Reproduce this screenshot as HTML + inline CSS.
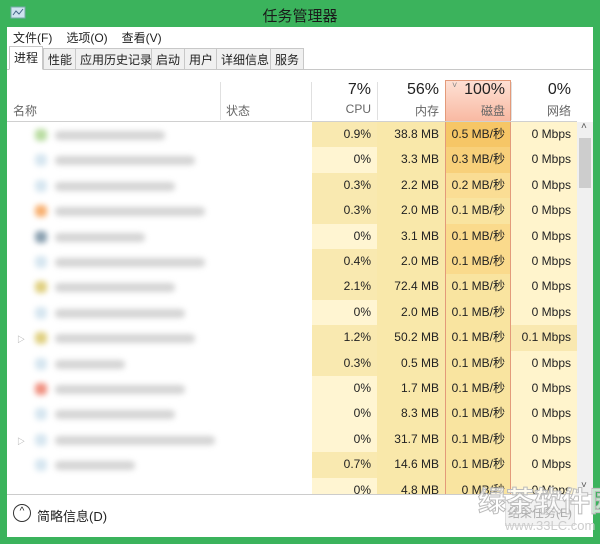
<!DOCTYPE html>
<html><head><meta charset="utf-8"><style>
*{margin:0;padding:0;box-sizing:border-box}
body{width:600px;height:544px;background:#3bb35c;font-family:"Liberation Sans","Noto Sans CJK SC",sans-serif;font-size:12px;color:#222;position:relative;overflow:hidden}
.a{position:absolute}
.title{left:0;top:5px;width:600px;text-align:center;font-size:15px;color:#1a1a1a}
.client{left:7px;top:27px;width:586px;height:510px;background:#fff}
.menu span{margin-right:14px}
.tab{top:48px;height:22px;border:1px solid #c8c8c8;background:#f0f0f0;padding:2px 4px;font-size:12px}
.c{position:absolute;text-align:right;padding-right:6px;line-height:25.4px;height:25.4px;font-size:12px}
.blur{position:absolute;height:9px;border-radius:4px;filter:blur(3px)}
</style></head><body>
<div class="a title">任务管理器</div>
<svg class="a" style="left:10px;top:6px" width="16" height="14"><rect x="1" y="1" width="14" height="11" fill="#cfe3ef" stroke="#7aa" /><path d="M3 9 L6 5 L9 8 L13 3" stroke="#468" fill="none"/></svg>
<div class="a client"></div>
<div class="a menu" style="left:13px;top:29px;font-size:12px"><span>文件(F)</span><span>选项(O)</span><span>查看(V)</span></div>
<div class="a" style="left:7px;top:69px;width:586px;height:1px;background:#c8c8c8"></div>
<div class="a tab" style="left:9px;top:46px;height:24px;background:#fff;border-bottom-color:#fff">进程</div>
<div class="a tab" style="left:43px">性能</div>
<div class="a tab" style="left:75px">应用历史记录</div>
<div class="a tab" style="left:151px">启动</div>
<div class="a tab" style="left:184px">用户</div>
<div class="a tab" style="left:216px">详细信息</div>
<div class="a tab" style="left:270px">服务</div>
<div class="a" style="left:13px;top:102px;color:#666">名称</div>
<div class="a" style="left:220px;top:82px;width:1px;height:38px;background:#e0e0e0"></div>
<div class="a" style="left:226px;top:102px;color:#666">状态</div>
<div class="a" style="left:311px;top:82px;width:1px;height:38px;background:#e0e0e0"></div>
<div class="a" style="left:377px;top:82px;width:1px;height:38px;background:#e0e0e0"></div>
<div class="a" style="left:445px;top:80px;width:66px;height:42px;background:linear-gradient(#fde0d4,#f9b9a2);border:1px solid #e39a7a"></div>
<div class="a" style="left:511px;top:82px;width:1px;height:38px;background:#e0e0e0"></div>
<div class="a" style="left:7px;top:121px;width:570px;height:1px;background:#d0d0d0"></div>
<div class="a" style="left:312px;top:81px;width:59px;text-align:right;font-size:16px">7%</div>
<div class="a" style="left:312px;top:102px;width:59px;text-align:right;color:#666">CPU</div>
<div class="a" style="left:378px;top:81px;width:61px;text-align:right;font-size:16px">56%</div>
<div class="a" style="left:378px;top:102px;width:61px;text-align:right;color:#666">内存</div>
<div class="a" style="left:452px;top:80px;color:#888;font-size:9px">˅</div>
<div class="a" style="left:446px;top:81px;width:59px;text-align:right;font-size:16px">100%</div>
<div class="a" style="left:446px;top:102px;width:59px;text-align:right;color:#666">磁盘</div>
<div class="a" style="left:512px;top:81px;width:59px;text-align:right;font-size:16px">0%</div>
<div class="a" style="left:512px;top:102px;width:59px;text-align:right;color:#666">网络</div>
<div id="rows"></div>
<div class="a" style="left:445px;top:122px;width:1px;height:373px;background:#e39a7a"></div>
<div class="a" style="left:510px;top:122px;width:1px;height:373px;background:#e39a7a"></div>
<div class="a" style="left:577px;top:122px;width:16px;height:373px;background:#f0f0f0"></div>
<div class="a" style="left:579px;top:138px;width:12px;height:50px;background:#cdcdcd"></div>
<div class="a" style="left:581px;top:121px;font-size:10px;color:#555">˄</div>
<div class="a" style="left:581px;top:480px;font-size:10px;color:#555">˅</div>
<div class="a" style="left:7px;top:494px;width:586px;height:43px;background:#fff;border-top:1px solid #ccc"></div>
<div class="a" style="left:13px;top:504px;width:18px;height:18px;border:1.5px solid #333;border-radius:50%;text-align:center;font-size:10px;line-height:14px">^</div>
<div class="a" style="left:37px;top:506px;font-size:13px">简略信息(D)</div>
<div class="a" style="left:505px;top:500px;width:70px;height:26px;border:1px solid #ddd;background:#f2f2f2;color:#aaa;text-align:center;line-height:24px">结束任务(E)</div>
<div class="a" style="left:478px;top:480px;font-size:28px;white-space:nowrap;color:rgba(255,255,255,.7);font-weight:bold;-webkit-text-stroke:1px #bbb">绿茶软件园</div>
<div class="a" style="left:505px;top:518px;font-size:13px;white-space:nowrap;color:#ccc">www.33LC.com</div>
<script>
var d=[["0.9%","38.8 MB","0.5 MB/秒","0 Mbps","#f6c666"],["0%","3.3 MB","0.3 MB/秒","0 Mbps","#f8d07a"],["0.3%","2.2 MB","0.2 MB/秒","0 Mbps","#fadd94"],["0.3%","2.0 MB","0.1 MB/秒","0 Mbps"],["0%","3.1 MB","0.1 MB/秒","0 Mbps","#fada8c"],["0.4%","2.0 MB","0.1 MB/秒","0 Mbps","#fada8c"],["2.1%","72.4 MB","0.1 MB/秒","0 Mbps"],["0%","2.0 MB","0.1 MB/秒","0 Mbps"],["1.2%","50.2 MB","0.1 MB/秒","0.1 Mbps"],["0.3%","0.5 MB","0.1 MB/秒","0 Mbps"],["0%","1.7 MB","0.1 MB/秒","0 Mbps"],["0%","8.3 MB","0.1 MB/秒","0 Mbps"],["0%","31.7 MB","0.1 MB/秒","0 Mbps"],["0.7%","14.6 MB","0.1 MB/秒","0 Mbps"],["0%","4.8 MB","0 MB/秒","0 Mbps"]];
var ic=["#b8dca0","#d6e6f0","#d6e6f0","#f8b070","#8aa0b0","#d6e6f0","#e0d080","#d6e6f0","#e0d080","#d6e6f0","#f09080","#d6e6f0","#d6e6f0","#d6e6f0","#d6e6f0"];
var w=[110,140,120,150,90,150,120,130,140,70,130,120,160,80,130];
var h="";
for(var i=0;i<d.length;i++){var y=122+i*25.4;var r=d[i];var hh=(i==14)?(494-y):25.4;
h+='<div class="c" style="left:312px;top:'+y+'px;width:65px;height:'+hh+'px;overflow:hidden;background:'+(r[0]=="0%"?"#fff5d2":"#f9e9b0")+'">'+r[0]+'</div>';
h+='<div class="c" style="left:377px;top:'+y+'px;width:68px;height:'+hh+'px;overflow:hidden;background:#f9e8aa">'+r[1]+'</div>';
h+='<div class="c" style="left:445px;top:'+y+'px;width:66px;height:'+hh+'px;overflow:hidden;background:'+(r[4]||"#f9e4a0")+'">'+r[2]+'</div>';
h+='<div class="c" style="left:511px;top:'+y+'px;width:66px;height:'+hh+'px;overflow:hidden;background:'+(r[3]=="0 Mbps"?"#fff4cc":"#f9e8b0")+'">'+r[3]+'</div>';
if(i<14){h+='<div class="blur" style="left:35px;top:'+(y+7)+'px;width:12px;height:12px;background:'+ic[i]+'"></div>';
h+='<div class="blur" style="left:55px;top:'+(y+9)+'px;width:'+w[i]+'px;background:#d4d4d4"></div>';}
}
document.getElementById("rows").innerHTML=h;
</script>
<div class="a" style="left:17px;top:334px;font-size:8px;color:#999">▷</div>
<div class="a" style="left:17px;top:436px;font-size:8px;color:#999">▷</div>
</body></html>
